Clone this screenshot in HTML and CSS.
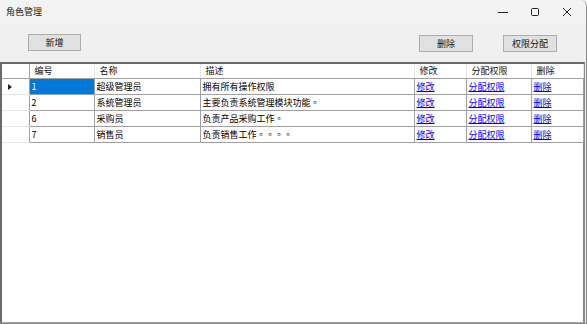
FILE: index.html
```html
<!DOCTYPE html>
<html lang="zh-CN">
<head>
<meta charset="utf-8">
<title>角色管理</title>
<link rel="stylesheet" href="styles.css">
</head>
<body>
<div class="window">
  <div class="titlebar">
    <span class="title">角色管理</span>
    <div class="controls">
      <span class="ctl"><svg width="10" height="10" viewBox="0 0 10 10"><path d="M0 5.5H10" stroke="#222" stroke-width="1"/></svg></span>
      <span class="ctl"><svg width="10" height="10" viewBox="0 0 10 10"><rect x="1.5" y="1.5" width="7" height="7" rx="1" fill="none" stroke="#222" stroke-width="1"/></svg></span>
      <span class="ctl"><svg width="10" height="10" viewBox="0 0 10 10"><path d="M1 1L9 9M9 1L1 9" stroke="#222" stroke-width="1"/></svg></span>
    </div>
  </div>
  <div class="toolbar">
    <button class="btn btn-add">新增</button>
    <div class="spacer"></div>
    <button class="btn btn-del">删除</button>
    <button class="btn btn-perm">权限分配</button>
  </div>
  <div class="grid">
    <table>
      <colgroup>
        <col class="c-rh"><col class="c-id"><col class="c-name"><col class="c-desc"><col class="c-edit"><col class="c-perm"><col class="c-del">
      </colgroup>
      <thead>
        <tr>
          <th class="rh"></th><th>编号</th><th>名称</th><th>描述</th><th>修改</th><th>分配权限</th><th>删除</th>
        </tr>
      </thead>
      <tbody>
        <tr>
          <td class="rh"><span class="arrow"></span></td><td class="sel">1</td><td>超级管理员</td><td>拥有所有操作权限</td><td><a href="#">修改</a></td><td><a href="#">分配权限</a></td><td><a href="#">删除</a></td>
        </tr>
        <tr>
          <td class="rh"></td><td>2</td><td>系统管理员</td><td>主要负责系统管理模块功能<span class="p" lang="zh-TW">。</span></td><td><a href="#">修改</a></td><td><a href="#">分配权限</a></td><td><a href="#">删除</a></td>
        </tr>
        <tr>
          <td class="rh"></td><td>6</td><td>采购员</td><td>负责产品采购工作<span class="p" lang="zh-TW">。</span></td><td><a href="#">修改</a></td><td><a href="#">分配权限</a></td><td><a href="#">删除</a></td>
        </tr>
        <tr>
          <td class="rh"></td><td>7</td><td>销售员</td><td>负责销售工作<span class="p" lang="zh-TW">。。。。</span></td><td><a href="#">修改</a></td><td><a href="#">分配权限</a></td><td><a href="#">删除</a></td>
        </tr>
      </tbody>
    </table>
  </div>
</div>
</body>
</html>
```

FILE: styles.css
```css
html, body {
  margin: 0;
  padding: 0;
  background: #f0f0f0;
}
body {
  font-family: "Noto Sans CJK SC", "Liberation Sans", sans-serif;
  font-size: 9px;
  color: #000;
}
.window {
  width: 586px;
  height: 323px;
  background: #f0f0f0;
  border-right: 1px solid #8a8a8a;
  border-bottom: 1px solid #8a8a8a;
  border-top-right-radius: 7px;
  display: flex;
  flex-direction: column;
  overflow: hidden;
}
.titlebar {
  height: 23px;
  background: #f3f3f3;
  display: flex;
  align-items: center;
}
.title {
  padding-left: 6px;
  font-size: 9px;
  color: #1a1a1a;
}
.controls {
  margin-left: auto;
  display: flex;
  height: 23px;
  margin-right: 3px;
}
.ctl {
  width: 32px;
  display: flex;
  align-items: center;
  justify-content: center;
}
.ctl svg { display: block; }
.toolbar {
  height: 39px;
  display: flex;
  align-items: flex-start;
  padding-top: 11px;
  box-sizing: border-box;
}
.btn {
  font-family: "Noto Sans CJK SC", "Liberation Sans", sans-serif;
  font-size: 9px;
  color: #111;
  background: #e1e1e1;
  border: 1px solid #adadad;
  height: 17px;
  padding: 0;
  line-height: 14px;
  box-sizing: border-box;
}
.btn-add { margin-left: 28px; width: 53px; }
.spacer { flex: 1; }
.btn-del { width: 54px; margin-top: 1px; }
.btn-perm { width: 54px; margin-left: 30px; margin-right: 29px; margin-top: 1px; }
.grid {
  flex: 1;
  margin-right: 1px;
  border-left: 2px solid #6a6a6a;
  border-top: 2px solid #6a6a6a;
  border-right: 2px solid #8a8a8a;
  border-bottom: 1px solid #a0a0a0;
  background: #fff;
}
table {
  border-collapse: collapse;
  table-layout: fixed;
  width: 581px;
}
.c-rh { width: 27px; }
.c-id { width: 65px; }
.c-name { width: 106px; }
.c-desc { width: 214px; }
.c-edit { width: 52px; }
.c-perm { width: 65px; }
.c-del { width: 52px; }
th, td {
  font-weight: normal;
  text-align: left;
  white-space: nowrap;
  overflow: hidden;
  padding: 0 0 0 2px;
  box-sizing: border-box;
}
th {
  height: 14px;
  line-height: 14px;
  padding-left: 5px;
  border-right: 1px solid #e5e5e5;
  border-bottom: 1px solid #a0a0a0;
  color: #111;
}
td {
  height: 16px;
  line-height: 15px;
  border-right: 1px solid #a0a0a0;
  border-bottom: 1px solid #a0a0a0;
}
td.rh, th.rh {
  border-right: 1px solid #a0a0a0;
  padding: 0;
}
td.rh { border-bottom: 1px solid #e5e5e5; position: relative; }
.arrow {
  position: absolute;
  left: 6px;
  top: 5px;
  width: 0;
  height: 0;
  border-top: 3px solid transparent;
  border-bottom: 3px solid transparent;
  border-left: 4px solid #222;
}
.p {
  font-family: "Noto Sans CJK TC", "Noto Sans CJK SC", sans-serif;
}
td.sel {
  background: #0078d7;
  color: #fff;
}
a {
  color: #0000ff;
  text-decoration: underline;
}
```
